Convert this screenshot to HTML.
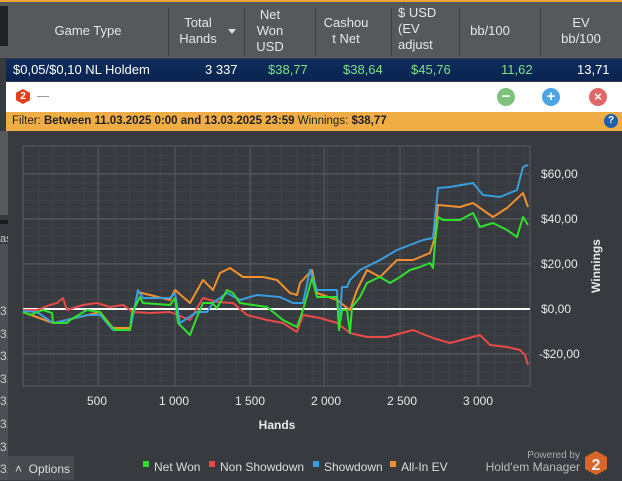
<!DOCTYPE html>
<html><head><meta charset="utf-8"><style>
*{margin:0;padding:0;box-sizing:border-box}
body{width:622px;height:480px;overflow:hidden;background:#373a3e;font-family:"Liberation Sans","DejaVu Sans",sans-serif;position:relative;color:#fff}
.abs{position:absolute}
.hdr{left:0;top:0;width:622px;height:58px;background:#55595c;border-top:2px solid #e8a33a}
.hc{position:absolute;top:2px;height:54px;display:flex;align-items:center;justify-content:center;text-align:center;font-size:13px;color:#e6e6e6;line-height:16px}
.dv{position:absolute;top:6px;width:1px;height:48px;background:#3a3d40}
.row{left:6px;top:59px;width:616px;height:22px;background:linear-gradient(#0e2c5c,#0a2450);font-size:13px}
.row span{position:absolute;top:3px}
.g{color:#7fe08a}
.wb{left:6px;top:82px;width:616px;height:30px;background:#fff}
.fl{left:6px;top:112px;width:616px;height:19px;background:#f0ad45;font-size:11.5px;color:#222;padding:3px 0 0 6px}
.c{position:absolute;width:18px;height:18px;border-radius:50%;color:#fff;font-size:15px;line-height:18px;text-align:center;font-weight:bold}
</style></head><body>
<div class="abs hdr">
<div class="abs" style="left:0;top:4px;width:8px;height:40px;background:#222"></div>
<div class="hc" style="left:8px;width:160px">Game Type</div>
<div class="dv" style="left:168px"></div>
<div class="hc" style="left:170px;width:56px">Total<br>Hands</div>
<div class="abs" style="left:228px;top:27px;border:4px solid transparent;border-top:5px solid #ddd"></div>
<div class="dv" style="left:244px"></div>
<div class="hc" style="left:245px;width:50px">Net<br>Won<br>USD</div>
<div class="dv" style="left:315px"></div>
<div class="hc" style="left:316px;width:60px">Cashou<br>t Net</div>
<div class="dv" style="left:391px"></div>
<div class="hc" style="left:392px;width:48px;justify-content:flex-start;text-align:left;padding-left:6px;top:0">$ USD<br>(EV<br>adjust</div>
<div class="dv" style="left:459px"></div>
<div class="hc" style="left:460px;width:60px">bb/100</div>
<div class="dv" style="left:540px"></div>
<div class="hc" style="left:541px;width:80px">EV<br>bb/100</div>
</div>
<div class="abs row">
<span style="left:7px">$0,05/$0,10 NL Holdem</span>
<span style="left:199px">3 337</span>
<span class="g" style="left:262px">$38,77</span>
<span class="g" style="left:337px">$38,64</span>
<span class="g" style="left:405px">$45,76</span>
<span class="g" style="left:495px">11,62</span>
<span style="left:571px">13,71</span>
</div>
<div class="abs wb">
<div class="abs" style="left:10px;top:7px;width:14px;height:15px;background:#e0421e;clip-path:polygon(50% 0,100% 25%,100% 75%,50% 100%,0 75%,0 25%);color:#fff;font-size:10px;font-weight:bold;text-align:center;line-height:15px">2</div>
<div class="abs" style="left:31px;top:14px;width:12px;height:1px;background:#999"></div>
<div class="c" style="left:491px;top:6px;background:#7cc27a">−</div>
<div class="c" style="left:536px;top:6px;background:#4ea5e6">+</div>
<div class="c" style="left:583px;top:6px;background:#e0686a;font-size:13px">×</div>
</div>
<div class="abs fl">Filter: <b>Between 11.03.2025 0:00 and 13.03.2025 23:59</b> Winnings: <b>$38,77</b>
<div class="c" style="left:598px;top:2px;width:14px;height:14px;font-size:10px;line-height:14px;background:#1e5fa8">?</div></div>
<div class="abs" style="left:0;top:131px;width:8px;height:84px;background:#56595c"></div>
<div class="abs" style="left:0;top:220px;width:8px;height:4px;background:#1a1a1a"></div>
<div class="abs" style="left:0;top:233px;font-size:11px;color:#ccc;width:8px;overflow:hidden">as</div>
<div class="abs" style="left:0;top:244px;width:8px;height:236px;background:#4c4f53"></div>
<div class="abs" style="left:0;top:300px;font-size:12px;color:#ccc;line-height:22.6px;width:8px;overflow:hidden">3.<br>3.<br>3.<br>3.<br>3.<br>3.<br>3.<br>3.</div>
<svg class="abs" style="left:0;top:0" width="622" height="480">
<defs><pattern id="mn" x="23" y="146" width="15.2" height="9" patternUnits="userSpaceOnUse"><path d="M0 0V9M0 0H15.2" stroke="#46494d" stroke-width="1" fill="none"/></pattern></defs>
<rect x="23" y="146" width="507" height="240" fill="url(#mn)" stroke="#5a5d61"/>
<g stroke="#585b5f" stroke-width="1">
<path d="M23 174H530M23 219H530M23 264H530M23 354H530"/>
<path d="M98 146V386M175 146V386M250 146V386M324 146V386M400 146V386M478 146V386"/>
</g>
<path d="M23 309H530" stroke="#fff" stroke-width="2"/>
<g fill="none" stroke-width="2" stroke-linejoin="round">
<polyline stroke="#e84a4a" points="23,310 37,310 50,305 57,303 63,298 67,310 83,305 97,303 110,307 123,305 133,312 150,313 170,312 190,320 203,298 217,302 233,303 247,315 267,320 283,323 297,332 303,315 320,318 337,323 350,333 367,337 387,337 413,330 433,338 450,343 480,335 490,345 507,347 520,350 525,355 528,365"/>
<polyline stroke="#f0902e" points="23,312 53,323 67,320 100,312 113,328 130,328 138,292 170,300 175,290 190,303 203,280 213,290 220,273 230,268 243,277 263,277 277,280 290,293 297,295 300,283 312,270 317,293 337,300 350,310 357,290 367,270 380,277 397,260 413,260 430,253 435,237 438,205 460,207 473,203 493,217 507,208 523,193 528,207"/>
<polyline stroke="#3a9ee0" points="23,311 37,312 53,323 67,320 87,315 100,315 113,330 130,330 138,290 143,298 170,298 175,293 180,323 197,312 207,312 213,303 227,293 240,300 257,295 280,297 293,303 303,303 310,270 317,290 337,290 339,330 342,287 347,287 350,280 360,270 380,260 397,250 423,240 433,238 438,188 450,187 473,183 483,195 500,197 517,190 523,167 528,165"/>
<polyline stroke="#2fe02f" points="23,312 30,315 43,310 52,313 53,323 67,323 70,320 87,310 100,312 107,322 115,330 130,330 132,313 140,297 143,303 170,305 175,298 178,323 190,335 197,317 203,303 212,303 217,308 227,290 233,293 240,303 253,305 267,307 283,320 297,327 303,310 312,278 317,297 337,297 339,330 342,310 347,310 350,333 352,307 360,297 367,283 373,280 380,277 390,283 400,277 410,270 420,267 430,263 433,268 435,243 438,217 443,220 460,220 473,213 480,227 493,223 507,230 517,237 523,217 528,225"/>
</g>
<g fill="#e8e8e8" font-size="12" font-family="Liberation Sans,sans-serif">
<text x="541" y="178">$60,00</text><text x="541" y="223">$40,00</text><text x="541" y="268">$20,00</text><text x="541" y="313">$0,00</text><text x="539" y="358">-$20,00</text>
<g text-anchor="middle"><text x="97" y="405">500</text><text x="174" y="405">1 000</text><text x="250" y="405">1 500</text><text x="326" y="405">2 000</text><text x="402" y="405">2 500</text><text x="478" y="405">3 000</text></g>
<text x="277" y="429" text-anchor="middle" font-weight="bold">Hands</text>
<text x="600" y="266" text-anchor="middle" font-weight="bold" transform="rotate(-90 600 266)">Winnings</text>
</g>
<g font-size="12" font-family="Liberation Sans,sans-serif" fill="#ddd">
<rect x="143" y="461" width="6" height="6" fill="#2fe02f"/><text x="154" y="471">Net Won</text>
<rect x="209" y="461" width="6" height="6" fill="#e84a4a"/><text x="220" y="471">Non Showdown</text>
<rect x="313" y="461" width="6" height="6" fill="#3a9ee0"/><text x="324" y="471">Showdown</text>
<rect x="390" y="461" width="6" height="6" fill="#f0902e"/><text x="401" y="471">All-In EV</text>
<text x="580" y="458" text-anchor="end" font-size="10" fill="#aaa">Powered by</text>
<text x="580" y="471" text-anchor="end" fill="#bbb">Hold'em Manager</text>
<polygon points="596,451 607,457 607,469 596,475 585,469 585,457" fill="#d8662a"/>
<text x="596" y="470" text-anchor="middle" font-size="16" font-weight="bold" fill="#eee">2</text>
</g>
</svg>
<div class="abs" style="left:8px;top:456px;width:66px;height:24px;background:#46494d;font-size:12px;color:#ddd;padding:6px 0 0 7px">˄ &nbsp;Options</div>
</body></html>
